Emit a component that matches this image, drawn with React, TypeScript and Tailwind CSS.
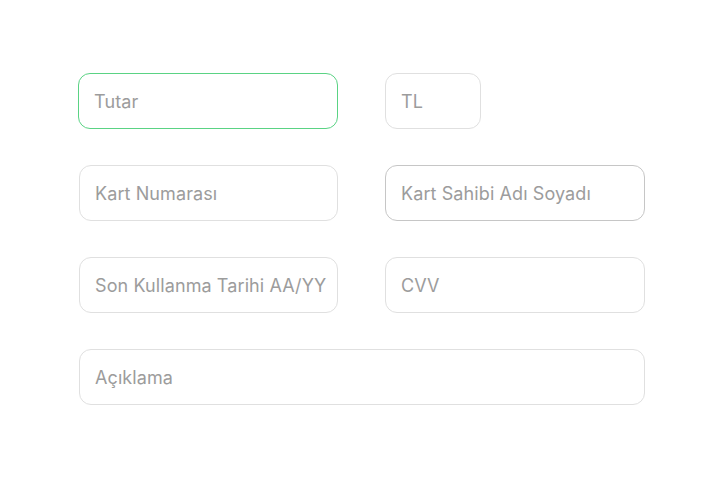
import { useState } from 'react';

type Field = {
  id: string;
  placeholder: string;
  span?: boolean;
  narrow?: boolean;
};

const fields: Field[] = [
  { id: 'amount', placeholder: 'Tutar' },
  { id: 'currency', placeholder: 'TL', narrow: true },
  { id: 'cardNumber', placeholder: 'Kart Numarası' },
  { id: 'holder', placeholder: 'Kart Sahibi Adı Soyadı' },
  { id: 'expiry', placeholder: 'Son Kullanma Tarihi AA/YY' },
  { id: 'cvv', placeholder: 'CVV' },
  { id: 'note', placeholder: 'Açıklama', span: true },
];

export default function App() {
  const [values, setValues] = useState<Record<string, string>>({});

  return (
    <div className="min-h-screen bg-white pl-[79px] pt-[73px]" style={{ fontFamily: 'Inter, "Noto Sans", sans-serif' }}>
      <div className="grid w-[566px] grid-cols-[259px_260px] gap-x-[47px] gap-y-9">
        {fields.map((f) => {
          let border = 'border-[#e0e0e0]';
          let width = f.narrow ? 'w-24' : 'w-full';
          if (f.id === 'amount') {
            border = 'border-[#5ad384] -ml-px';
            width = 'w-[260px]';
          }
          if (f.id === 'holder') border = 'border-[#c6c6c6]';
          return (
            <div key={f.id} className={f.span ? 'col-span-2' : ''}>
              <input
                value={values[f.id] ?? ''}
                onChange={(e) => setValues({ ...values, [f.id]: e.target.value })}
                placeholder={f.placeholder}
                className={`h-14 rounded-xl border bg-white pl-[15px] pr-2 text-[18px] tracking-[0.1px] text-[#555] outline-none placeholder:text-[#9c9c9c] ${border} ${width}`}
              />
            </div>
          );
        })}
      </div>
    </div>
  );
}
